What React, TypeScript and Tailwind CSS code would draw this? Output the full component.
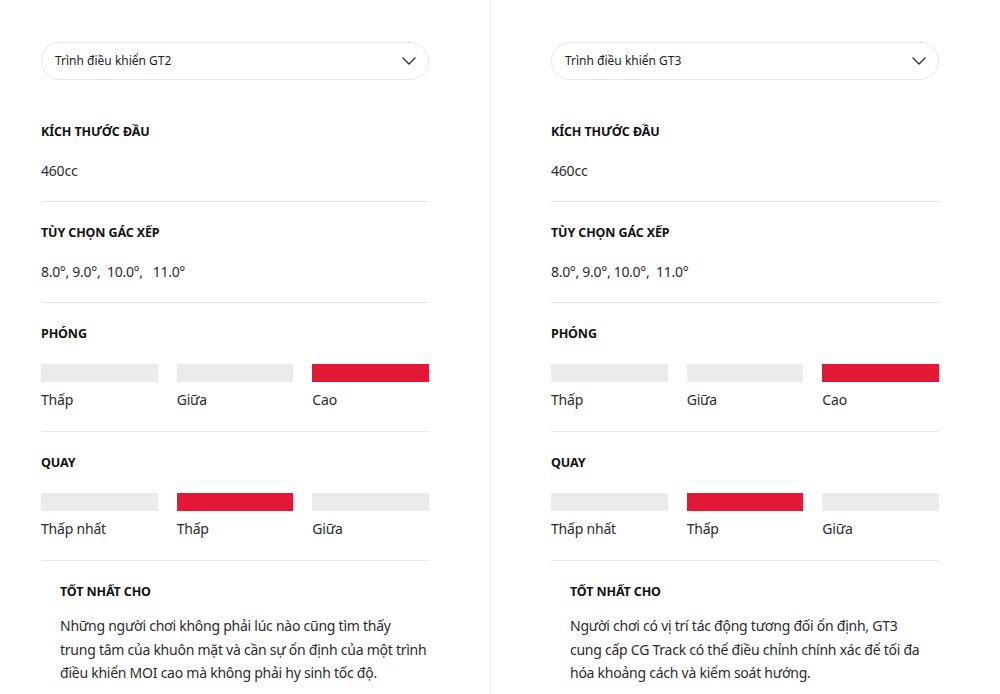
import React from "react";
import { ChevronDown } from "lucide-react";

type Scale = { title: string; labels: string[]; active: number };

type Driver = {
  name: string;
  headSize: string;
  lofts: string;
  launch: Scale;
  spin: Scale;
  bestFor: string[]; // pre-broken lines, same wrapping as the live page
};

const drivers: Driver[] = [
  {
    name: "Trình điều khiển GT2",
    headSize: "460cc",
    lofts: "8.0°, 9.0°,  10.0°,   11.0°",
    launch: { title: "PHÓNG", labels: ["Thấp", "Giữa", "Cao"], active: 2 },
    spin: { title: "QUAY", labels: ["Thấp nhất", "Thấp", "Giữa"], active: 1 },
    bestFor: [
      "Những người chơi không phải lúc nào cũng tìm thấy",
      "trung tâm của khuôn mặt và cần sự ổn định của một trình",
      "điều khiển MOI cao mà không phải hy sinh tốc độ.",
    ],
  },
  {
    name: "Trình điều khiển GT3",
    headSize: "460cc",
    lofts: "8.0°, 9.0°, 10.0°,  11.0°",
    launch: { title: "PHÓNG", labels: ["Thấp", "Giữa", "Cao"], active: 2 },
    spin: { title: "QUAY", labels: ["Thấp nhất", "Thấp", "Giữa"], active: 1 },
    bestFor: [
      "Người chơi có vị trí tác động tương đối ổn định, GT3",
      "cung cấp CG Track có thể điều chỉnh chính xác để tối đa",
      "hóa khoảng cách và kiểm soát hướng.",
    ],
  },
];

const Heading = ({ children }: { children: React.ReactNode }) => (
  <h3 className="text-[12.5px] leading-4 font-bold text-[#111] tracking-[-0.01em]">{children}</h3>
);

const ScaleBars = ({ scale }: { scale: Scale }) => (
  <div className="border-b border-[#e8e8e8] pt-[23px] pb-[21px]">
    <Heading>{scale.title}</Heading>
    <div className="grid grid-cols-3 gap-x-[19px] mt-[22px]">
      {scale.labels.map((label, i) => (
        <div key={label} className="flex flex-col gap-2">
          <div className={i === scale.active ? "h-[18px] bg-[#e31837]" : "h-[18px] bg-[#ebebeb]"} />
          <span className="text-[14px] leading-5 text-[#2b2b2b] tracking-[-0.2px]">{label}</span>
        </div>
      ))}
    </div>
  </div>
);

const DriverColumn = ({ driver }: { driver: Driver }) => (
  <div className="flex flex-col">
    {/* model picker */}
    <button className="h-[38px] w-full rounded-full border border-[#e6e6e6] bg-white pl-[13px] pr-[7px] flex items-center justify-between">
      <span className="text-[12px] text-[#222]">{driver.name}</span>
      <ChevronDown size={24} strokeWidth={1.4} className="text-[#333]" />
    </button>

    <div className="border-b border-[#e8e8e8] pt-[44px] pb-[20px]">
      <Heading>KÍCH THƯỚC ĐẦU</Heading>
      <p className="mt-[21px] text-[14px] leading-5 text-[#2b2b2b] tracking-[-0.2px]">{driver.headSize}</p>
    </div>

    <div className="border-b border-[#e8e8e8] pt-[23px] pb-[20px]">
      <Heading>TÙY CHỌN GÁC XẾP</Heading>
      <p className="mt-[21px] text-[14px] leading-5 text-[#2b2b2b] tracking-[-0.3px] whitespace-pre">{driver.lofts}</p>
    </div>

    <ScaleBars scale={driver.launch} />
    <ScaleBars scale={driver.spin} />

    <div className="pl-[19px] pt-[23px]">
      <Heading>TỐT NHẤT CHO</Heading>
      <p className="mt-[14px] text-[14px] leading-[23.5px] text-[#2b2b2b] tracking-[-0.25px] whitespace-nowrap">
        {driver.bestFor.map((line, i) => (
          <React.Fragment key={i}>
            {i > 0 && <br />}
            {line}
          </React.Fragment>
        ))}
      </p>
    </div>
  </div>
);

export default function App() {
  return (
    <div
      className="w-[1000px] h-[694px] overflow-hidden bg-white flex"
      style={{ fontFamily: '"Noto Sans", "Open Sans", sans-serif' }}
    >
      <div className="w-[491px] shrink-0 border-r border-[#ebebeb] pl-[41px] pr-[61px] pt-[42px]">
        <DriverColumn driver={drivers[0]} />
      </div>
      <div className="flex-1 pl-[60px] pr-[61px] pt-[42px]">
        <DriverColumn driver={drivers[1]} />
      </div>
    </div>
  );
}
